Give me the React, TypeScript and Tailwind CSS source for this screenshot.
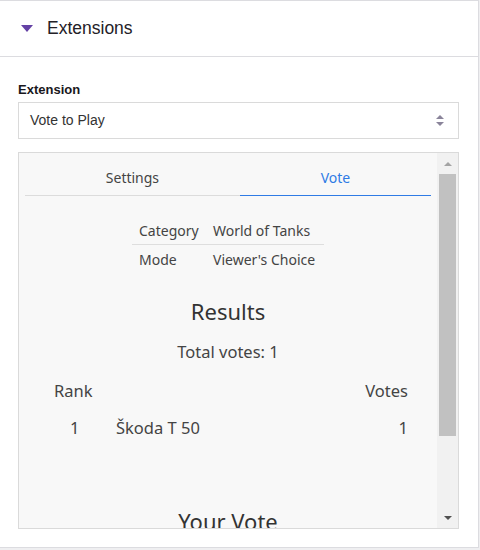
import React from 'react';

const inner = { fontFamily: "'Noto Sans', 'Open Sans', sans-serif" };

function Scrollbar() {
  return (
    <div className="flex w-[21px] flex-col items-center bg-[#f1f1f1]">
      <div className="flex h-[21px] w-full items-center justify-center">
        <div className="h-0 w-0 border-x-[4px] border-b-[4px] border-x-transparent border-b-[#a3a3a3]" />
      </div>
      <div className="h-[262px] w-[17px] bg-[#c1c1c1]" />
      <div className="flex-1" />
      <div className="flex h-[20px] w-full items-center justify-center">
        <div className="h-0 w-0 border-x-[4px] border-t-[4px] border-x-transparent border-t-[#505050]" />
      </div>
    </div>
  );
}

function VotePanel() {
  return (
    <div className="h-full overflow-hidden text-[#444]" style={inner}>
      {/* tabs */}
      <div className="mx-[6px] mt-[7px] flex h-[36px] border-b border-[#dcdcdc] text-[14px]">
        <div className="flex flex-auto items-center justify-center text-[#444]">Settings</div>
        <div className="-mb-px flex flex-auto items-center justify-center border-b border-[#2f7be5] text-[#2f7be5]">Vote</div>
      </div>

      {/* details table */}
      <div className="mt-[20px] flex justify-center text-[14px]">
        <div className="w-[192px]">
          <div className="flex h-[29px] items-center border-b border-[#dedede] px-[7px]">
            <span className="w-[74px]">Category</span>
            <span>World of Tanks</span>
          </div>
          <div className="flex h-[29px] items-center px-[7px]">
            <span className="w-[74px]">Mode</span>
            <span>Viewer's Choice</span>
          </div>
        </div>
      </div>

      <div className="mt-[22px] text-center text-[22px] leading-[30px] text-[#333]">Results</div>
      <div className="mt-[12px] text-center text-[16.5px] leading-[28px]">Total votes: 1</div>

      <div className="ml-[35px] mr-[29px] mt-[11px] text-[16.5px]">
        <div className="flex h-[28px] items-center justify-between">
          <span>Rank</span>
          <span>Votes</span>
        </div>
        <div className="mt-[9px] flex h-[28px] items-center">
          <span className="w-[62px] pl-[16px]">1</span>
          <span className="flex-1">Škoda T 50</span>
          <span>1</span>
        </div>
      </div>

      <div className="mt-[64px] text-center text-[22px] leading-[30px] text-[#333]">Your Vote</div>
    </div>
  );
}

export default function App() {
  return (
    <div className="h-[550px] w-[480px] bg-[#efeff1]" style={{ fontFamily: "'Liberation Sans', Arial, sans-serif" }}>
      <div className="h-[548px] w-[479px] border-t border-r border-b border-[#dcdce0] bg-white">
        {/* header */}
        <div className="flex h-[56px] items-center border-b border-[#dcdce0] px-[21px]">
          <div className="h-0 w-0 border-x-[6px] border-t-[7px] border-x-transparent border-t-[#6441a5]" />
          <span className="ml-[14px] text-[17.5px] text-[#232127]">Extensions</span>
        </div>

        <div className="px-[18px] pt-[25px]">
          <div className="text-[13px] font-bold leading-[16px] text-[#19171c]">Extension</div>
          <div className="mt-[4px] flex h-[37px] w-[441px] items-center justify-between border border-[#dadada] px-[11px]">
            <span className="text-[14px] text-[#333]">Vote to Play</span>
            <div className="mr-[3px] flex flex-col items-center gap-[3px]">
              <div className="h-0 w-0 border-x-[4px] border-b-[4px] border-x-transparent border-b-[#8a849a]" />
              <div className="h-0 w-0 border-x-[4px] border-t-[4px] border-x-transparent border-t-[#8a849a]" />
            </div>
          </div>

          <div className="mt-[13px] flex h-[377px] w-[441px] border border-[#dadada] bg-[#f8f8f8]">
            <div className="flex-1">
              <VotePanel />
            </div>
            <Scrollbar />
          </div>
        </div>
      </div>
    </div>
  );
}
